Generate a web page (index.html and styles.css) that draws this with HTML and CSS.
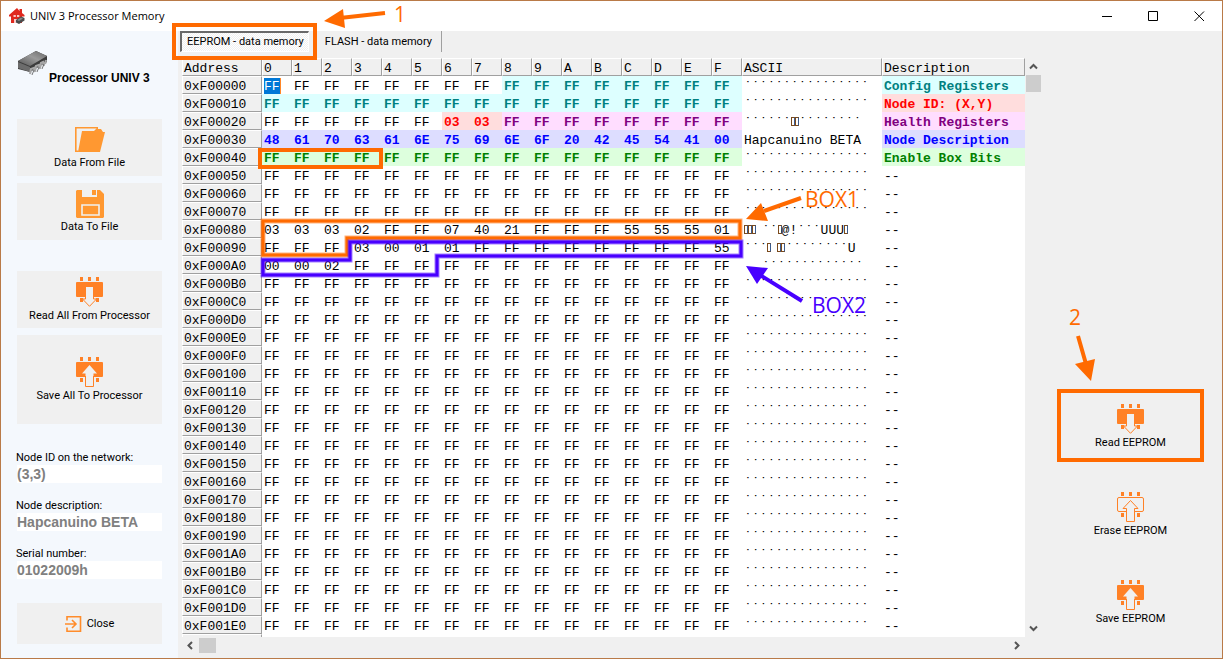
FILE: index.html
```html
<!DOCTYPE html>
<html lang="en">
<head>
<meta charset="utf-8">
<title>UNIV 3 Processor Memory</title>
<link rel="stylesheet" href="styles.css">
</head>
<body>
<svg class="defs" aria-hidden="true">
  <symbol id="chip-pins" viewBox="0 0 27 30"><path fill="#ff8126" d="M4 0h3v4H4zM12 0h3v4h-3zM20 0h3v4h-3zM4 21h3v4H4zM20 21h3v4h-3z"/></symbol>
  <symbol id="chip-read" viewBox="0 0 27 30"><use href="#chip-pins"/><rect y="5" width="27" height="15" rx="1" fill="#ff8126"/><path d="M10 10h7v12h3.500l-7 7.500-7-7.500H10z" fill="#f0f0f0"/><path d="M9.500 20v2h-3l7 7.300 7-7.300h-3v-2" fill="none" stroke="#ff8126"/></symbol>
  <symbol id="chip-save" viewBox="0 0 27 30"><use href="#chip-pins"/><rect y="5" width="27" height="15" rx="1" fill="#ff8126"/><path d="M13.500 8l7.500 8.500h-3.500V30h-8V16.500H6z" fill="#f0f0f0"/><path d="M9.500 19v10.500h8V19" fill="none" stroke="#ff8126"/></symbol>
  <symbol id="chip-erase" viewBox="0 0 27 30"><use href="#chip-pins"/><rect x=".5" y="5.500" width="26" height="14" rx="1.500" fill="#f0f0f0" stroke="#ff8126"/><path d="M13.500 8.500l7.500 8h-3.500v13h-8v-13H6z" fill="#f0f0f0" stroke="#ff8126"/></symbol>
</svg>

<div class="window">
  <header class="titlebar">
    <svg class="app-icon" viewBox="0 0 16 16" aria-hidden="true">
      <path fill="#e0281e" d="M8 0L0 7v1.500h2V15h11V8.500h2.500V7L13 5V1h-2.500v2z"/>
      <path fill="#fff" opacity=".75" d="M4.500 7h2.300v2H4.500zM8 7h2.300v2H8zM5 11h3v4H5z"/>
      <path fill="#4b4b4b" d="M7 12l5-3.500 3.500 1.500v2.500L10 16l-3-1.500z"/><path fill="#8a8a8a" d="M8 12l4-2.500 2 1-4 2.500z"/>
    </svg>
    <h1 class="title">UNIV 3 Processor Memory</h1>
    <div class="window-controls">
      <button type="button" aria-label="Minimize"><svg viewBox="0 0 11 11"><path d="M0 5.500h10"/></svg></button>
      <button type="button" aria-label="Maximize"><svg viewBox="0 0 11 11"><path d="M.5.5h9v9h-9z"/></svg></button>
      <button type="button" aria-label="Close window"><svg viewBox="0 0 11 11"><path d="M.5.5l9.500 9.500M10 .5L.5 10"/></svg></button>
    </div>
  </header>

  <div class="body">
    <aside class="sidebar">
      <div class="device">
        <svg class="device-icon" viewBox="0 0 31 26" aria-hidden="true">
          <defs><linearGradient id="metal" x1="0" y1="1" x2="1" y2="0"><stop offset="0" stop-color="#555"/><stop offset=".55" stop-color="#9a9a9a"/><stop offset="1" stop-color="#666"/></linearGradient></defs>
          <path fill="#3c3c3c" d="M1 11L19 1l11 5v6L13 22 1 19z"/>
          <path fill="url(#metal)" d="M1 11L19 1l11 5-17 10z"/>
          <path fill="#6c6c6c" d="M1 12l12 5v5L1 18z"/>
          <g fill="none" stroke="#a8a8a8" stroke-width="2.200"><path d="M13 24l1-5 3-1 1 4M18 21l1-5 3-1 1 4M23 18l1-5 2-1 1 4M28 14l1-4"/></g>
          <g fill="none" stroke="#555" stroke-width=".8"><path d="M15 25l2-5M20 22l2-5M25 19l2-5"/></g>
        </svg>
        <h2 class="device-name">Processor UNIV 3</h2>
      </div>

      <div class="group">
        <button type="button" class="tool tool-folder">
          <svg class="icon-folder" viewBox="0 0 30 25" aria-hidden="true"><path fill="none" stroke="#ff9831" stroke-width="1.600" d="M3.500 24.200H.8V.8h21.400V3"/><path fill="#ff9831" d="M7 4h12l2-2h5l2 3h2l-5 20H3z"/></svg>
          Data From File
        </button>
        <button type="button" class="tool">
          <svg class="icon-disk" viewBox="0 0 28 28" aria-hidden="true"><path fill="#ff9831" d="M1 0h5v7h15V0h3l4 4v23l-1 1H1l-1-1V1z"/><path fill="#ff9831" d="M16 0h4v5h-4z"/><path fill="none" stroke="#f0f0f0" stroke-width="1.600" d="M6 15h17v10H6z"/></svg>
          Data To File
        </button>
      </div>
      <div class="group">
        <button type="button" class="tool"><svg class="icon-chip" aria-hidden="true"><use href="#chip-read"/></svg>Read All From Processor</button>
        <button type="button" class="tool tool-tall"><svg class="icon-chip" aria-hidden="true"><use href="#chip-save"/></svg>Save All To Processor</button>
      </div>

      <div class="fields">
        <div class="field"><label for="node-id">Node ID on the network:</label><input id="node-id" type="text" value="(3,3)" readonly></div>
        <div class="field"><label for="node-desc">Node description:</label><input id="node-desc" type="text" value="Hapcanuino BETA" readonly></div>
        <div class="field"><label for="serial">Serial number:</label><input id="serial" type="text" value="01022009h" readonly></div>
      </div>

      <button type="button" class="tool tool-close">
        <svg class="icon-exit" viewBox="0 0 17 16" aria-hidden="true"><path fill="none" stroke="#ff8c2b" stroke-width="1.600" d="M2 4.500V.8h13.500v14.400H2v-3.700"/><path fill="none" stroke="#ff8c2b" stroke-width="1.600" d="M0 8h11M7 4l4 4-4 4"/></svg>
        Close
      </button>
    </aside>

    <main class="memory">
      <nav class="tabs">
        <button type="button" class="tab tab-active">EEPROM - data memory</button>
        <button type="button" class="tab">FLASH - data memory</button>
      </nav>
      <div class="content">
        <div class="viewer">
          <div class="grid-view">
            <table class="hex">
              <colgroup><col class="col-address"><col class="col-byte" span="16"><col class="col-ascii"><col></colgroup>
              <thead><tr id="hex-head"></tr></thead>
              <tbody id="hex-body"></tbody>
            </table>
          </div>
          <div class="vscroll">
            <button type="button" aria-label="Scroll up"><svg viewBox="0 0 9 7"><path d="M1 5.500L4.500 2 8 5.500"/></svg></button>
            <div class="vthumb"></div>
            <button type="button" class="scroll-end" aria-label="Scroll down"><svg viewBox="0 0 9 7"><path d="M1 1.500L4.500 5 8 1.500"/></svg></button>
          </div>
          <div class="hscroll">
            <button type="button" aria-label="Scroll left"><svg viewBox="0 0 9 9"><path d="M6 1L2.500 4.500 6 8"/></svg></button>
            <div class="hthumb"></div>
            <button type="button" class="scroll-end" aria-label="Scroll right"><svg viewBox="0 0 9 9"><path d="M3 1l3.500 3.500L3 8"/></svg></button>
          </div>
        </div>
        <div class="actions">
          <button type="button" class="action"><svg class="icon-chip" aria-hidden="true"><use href="#chip-read"/></svg>Read EEPROM</button>
          <button type="button" class="action"><svg class="icon-chip" aria-hidden="true"><use href="#chip-erase"/></svg>Erase EEPROM</button>
          <button type="button" class="action"><svg class="icon-chip" aria-hidden="true"><use href="#chip-save"/></svg>Save EEPROM</button>
        </div>
      </div>
    </main>
  </div>

  <svg class="annotations" width="1223" height="659" viewBox="0 0 1223 659">
    <g fill="none" stroke="#ff6a00" stroke-width="4">
      <path d="M174 25h141v33H174zM260 150h121v17H260zM1059 391h143v69h-143z"/>
      <path d="M385 13L340 18M801 198L764 211M1078 336L1086 364"/>
    </g>
    <g fill="none" stroke="#ff6a00"><path id="box1" stroke-width="5" stroke-opacity=".5" d="M263 221H740V238H347V255H263z"/><path stroke-width="3" d="M263 221H740V238H347V255H263z"/></g>
    <g fill="none" stroke="#4800ff"><path stroke-width="5" stroke-opacity=".5" d="M350 242H741V256H437V275H263V260H350z"/><path stroke-width="3" d="M350 242H741V256H437V275H263V260H350z"/></g>
    <path fill="none" stroke="#4800ff" stroke-width="4" d="M802 301L760 275"/>
    <path fill="#ff6a00" d="M324 21l19-12 2 19zM746 219l15-16 7 18zM1091 381l-16-17 20-5z"/>
    <path fill="#4800ff" d="M746 266l22 2-11 16z"/>
    <g class="note">
      <text x="394" y="22">1</text>
      <text x="1069" y="325">2</text>
      <text x="805" y="207">BOX1</text>
      <text x="812" y="313" class="note-violet">BOX2</text>
    </g>
  </svg>
</div>
<script src="memory.js"></script>
</body>
</html>
```

FILE: styles.css
```css
* { box-sizing: border-box; }
html, body { height: 100%; margin: 0; }
body { font: 11px/14px Roboto, "Liberation Sans", Arial, sans-serif; color: #000; background: #f0f0f0; overflow: hidden; }
button { font: inherit; color: inherit; border: 0; padding: 0; background: none; }
h1, h2 { margin: 0; }
.defs { position: absolute; width: 0; height: 0; }

.window { position: relative; display: flex; flex-direction: column; height: 100vh; border: 1px solid #b97a48; }
.titlebar { display: flex; align-items: center; height: 30px; padding-left: 8px; background: #fff; flex: none; }
.app-icon { width: 16px; height: 16px; margin-right: 5px; }
.title { flex: 1; font: 11px/16px "Open Sans", "Noto Sans", sans-serif; }
.window-controls { display: flex; }
.window-controls button { display: grid; place-items: center; width: 46px; height: 29px; }
.window-controls svg { width: 11px; height: 11px; fill: none; stroke: #000; }

.body { display: flex; flex: 1; min-height: 0; }

.sidebar { display: flex; flex-direction: column; flex: none; width: 177px; padding: 19px 16px 14px; background: #f4f8fd; }
.device { display: flex; align-items: flex-start; height: 69px; }
.device-icon { flex: none; width: 31px; height: 26px; }
.device-name { padding: 20px 0 0 1px; font: bold 12px/16px "Liberation Sans", Arial, sans-serif; white-space: nowrap; }
.group { display: flex; flex-direction: column; gap: 7px; margin-bottom: 31px; }
.tool { display: flex; flex-direction: column; align-items: center; justify-content: center; gap: 2px; height: 57px; background: #f0f0f0; white-space: nowrap; }
.tool-folder { gap: 4px; padding-top: 2px; }
.tool-tall { height: 89px; }
.tool-close { flex-direction: row; gap: 5px; height: 41px; margin-top: auto; }
.icon-folder { width: 30px; height: 25px; }
.icon-disk { width: 28px; height: 28px; }
.icon-chip { width: 27px; height: 30px; }
.icon-exit { width: 17px; height: 16px; }
.fields { display: flex; flex-direction: column; gap: 16px; margin-top: -4px; }
.field { display: flex; flex-direction: column; }
.field label { margin-left: -1px; }
.field input { width: 100%; height: 18px; padding: 0; border: 0; background: #fff; color: #808080; font: bold 14px/18px "Liberation Sans", Arial, sans-serif; outline: 0; }

.memory { display: flex; flex: 1; flex-direction: column; min-width: 0; background: #f0f0f0; }
.tabs { display: flex; flex: none; height: 27px; padding-left: 2px; }
.tab { height: 21px; padding: 0 9px 0 11px; border-right: 1px solid #a0a0a0; white-space: nowrap; }
.tab-active { padding: 0 4px 0 5px; margin-right: 4px; border: 1px solid #fff; border-top: 2px solid #696969; border-left: 2px solid #696969; background: repeating-conic-gradient(#fff 0 25%, #f0f0f0 0 50%) 0 0 / 2px 2px; }
.tab-active + .tab { border-left: 1px solid #a0a0a0; }

.content { display: flex; flex: 1; min-height: 0; }
.viewer { display: grid; flex: 1; grid-template: minmax(0, 1fr) 21px / minmax(0, 1fr) 17px; min-width: 0; padding-left: 4px; }
.grid-view { overflow: hidden; background: #fff; }
.hex { width: 100%; table-layout: fixed; border-collapse: separate; border-spacing: 0; font: 13px/13px "Liberation Mono", "Courier New", monospace; }
.col-address { width: 80px; }
.col-byte { width: 30px; }
.col-ascii { width: 140px; }
.hex th, .hex td { height: 18px; padding: 4px 0 0 2px; text-align: left; vertical-align: top; font-weight: normal; white-space: pre; overflow: hidden; }
.hex th { padding: 3px 0 0 1px; border: 1px solid #a0a0a0; border-top-color: #fff; border-left-color: #fff; background: #f0f0f0; }
.hex td.config, .hex td.node, .hex td.health, .hex td.desc, .hex td.enable { font-weight: bold; }
.config { color: #008080; background: #dff; }
.node { color: #f00; background: #fdd; }
.health { color: #800080; background: #fdf; }
.desc { color: #00f; background: #ddf; }
.enable { color: #008000; background: #dfd; }
.cursor { padding: 1px 0; background: #0078d7; color: #fff; border-right: 1px solid #ff8728; }
.ctl { display: inline-block; width: 4px; height: 9px; border: 1px solid #7a4a1c; border-right-color: #3b5a8c; }
.blank { display: inline-block; width: 6px; }

.vscroll, .hscroll { display: flex; align-items: center; }
.vscroll { flex-direction: column; }
.vscroll button, .hscroll button { display: grid; place-items: center; width: 17px; height: 17px; }
.vscroll svg, .hscroll svg { width: 9px; height: 9px; fill: none; stroke: #555; stroke-width: 2; }
.scroll-end { margin-left: auto; }
.vscroll .scroll-end { margin: auto 0 0; }
.vthumb { width: 15px; height: 17px; background: #cdcdcd; }
.hscroll { align-items: flex-start; }
.hthumb { width: 17px; height: 15px; margin-top: 1px; background: #cdcdcd; }

.actions { display: flex; flex-direction: column; justify-content: flex-end; gap: 24px; flex: none; width: 180px; padding: 0 19px 23px 16px; }
.action { display: flex; flex-direction: column; align-items: center; justify-content: center; gap: 2px; height: 64px; }

.annotations { position: absolute; top: -1px; left: -1px; pointer-events: none; }
.note { fill: #ff6a00; font: 21px "Open Sans", "Noto Sans", sans-serif; }
.note-violet { fill: #4800ff; }
```

FILE: memory.js
```js
const ROWS = 32;
const BASE = 0xF00000;
const data = new Array(ROWS * 16).fill(0xFF);
const write = (offset, text) => text.split(" ").forEach((h, i) => { data[offset + i] = parseInt(h, 16); });
write(0x26, "03 03");
write(0x30, "48 61 70 63 61 6E 75 69 6E 6F 20 42 45 54 41 00");
write(0x38, "6E 6F 20 42 45 54 41 00");
write(0x80, "03 03 03 02 FF FF 07 40 21 FF FF FF 55 55 55 01");
write(0x93, "03 00 01 01");
write(0x9F, "55 00 00 02");

const regions = [
  [0x08, 0x1F, "config"], [0x26, 0x27, "node"], [0x28, 0x2F, "health"],
  [0x30, 0x3F, "desc"], [0x40, 0x4F, "enable"]
];
const notes = [
  ["Config Registers", "config"], ["Node ID: (X,Y)", "node"], ["Health Registers", "health"],
  ["Node Description", "desc"], ["Enable Box Bits", "enable"]
];

const hex = (n, len) => n.toString(16).toUpperCase().padStart(len, "0");
const regionOf = (i) => (regions.find(([a, b]) => i >= a && i <= b) || [])[2] || "";
function glyph(b) {
  if (b === 0xFF) return "\u02D9";
  if (b === 0 || b === 2) return '<span class="blank"></span>';
  if (b < 32) return '<span class="ctl"></span>';
  return String.fromCharCode(b);
}

const head = ["Address"];
for (let i = 0; i < 16; i++) head.push(hex(i, 1));
head.push("ASCII", "Description");
document.getElementById("hex-head").innerHTML = head.map((t) => `<th scope="col">${t}</th>`).join("");

let html = "";
for (let r = 0; r < ROWS; r++) {
  const bytes = data.slice(r * 16, r * 16 + 16);
  const [note, cls] = notes[r] || ["--", ""];
  html += `<tr><th scope="row">0x${hex(BASE + r * 16, 6)}</th>`;
  html += bytes.map((b, c) => {
    const text = hex(b, 2);
    return `<td class="${regionOf(r * 16 + c)}">${r + c === 0 ? `<span class="cursor">${text}</span>` : text}</td>`;
  }).join("");
  html += `<td>${bytes.map(glyph).join("")}</td><td class="${cls}">${note}</td></tr>`;
}
document.getElementById("hex-body").innerHTML = html;
```
